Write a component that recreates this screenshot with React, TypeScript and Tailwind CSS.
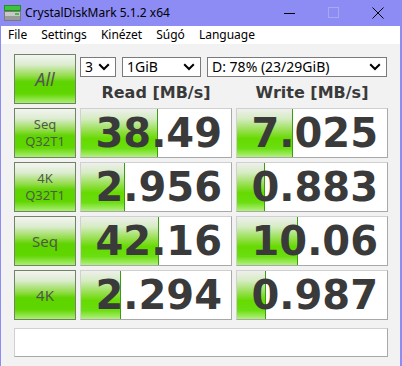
import React from "react";

const btnBg =
  "bg-[linear-gradient(to_bottom,#f4f5f2_0%,#dcecd0_20%,#92dc48_44%,#5ed400_56%,#60d600_80%,#acee74_100%)]";
const barBg =
  "bg-[linear-gradient(to_bottom,#eef0ec_0%,#d6ecc4_20%,#8ede40_48%,#66da00_62%,#6ade10_82%,#b4f080_100%)]";

function TestButton({ lines }: { lines: string[] }) {
  const single = lines.length === 1;
  return (
    <div
      className={`w-[62px] h-[50px] border border-[#6e8462] ${btnBg} flex flex-col items-center justify-center text-[#4e5a46] ${
        single ? "text-[15px] leading-[18px]" : "text-[13px] leading-[17px]"
      }`}
      style={{ fontFamily: '"Noto Sans", "Open Sans", sans-serif' }}
    >
      {lines.map((l) => (
        <span key={l}>{l}</span>
      ))}
    </div>
  );
}

function ValueBox({ value, bar }: { value: string; bar: number }) {
  return (
    <div className="relative w-[152px] h-[50px] border border-[#d0d0d0] border-r-[#a8a8a8] border-b-[#a8a8a8] bg-white overflow-hidden">
      <div
        className={`absolute left-0 top-0 bottom-0 ${barBg} border-r border-[#3c9a14]`}
        style={{ width: bar }}
      />
      <div
        className="relative h-full flex items-center justify-end pr-[9px] text-[40px] font-bold text-[#3a3a3a] leading-none"
        style={{ fontFamily: '"DejaVu Sans", Verdana, sans-serif' }}
      >
        {value}
      </div>
    </div>
  );
}

function Select({ w, label }: { w: number; label: string }) {
  return (
    <div
      className="h-[20px] border border-[#7a7a7a] bg-white flex items-center justify-between pl-[4px] pr-[5px] text-[14px] text-black"
      style={{ width: w, fontFamily: '"Noto Sans", "Open Sans", sans-serif' }}
    >
      <span className="leading-none">{label}</span>
      <svg width="12" height="8" viewBox="0 0 12 8">
        <path d="M1.2 1.2 L6 6 L10.8 1.2" fill="none" stroke="#000" strokeWidth="2" />
      </svg>
    </div>
  );
}

const rows = [
  { lines: ["Seq", "Q32T1"], r: "38.49", rb: 77, w: "7.025", wb: 56 },
  { lines: ["4K", "Q32T1"], r: "2.956", rb: 44, w: "0.883", wb: 28 },
  { lines: ["Seq"], r: "42.16", rb: 78, w: "10.06", wb: 61 },
  { lines: ["4K"], r: "2.294", rb: 40, w: "0.987", wb: 29 },
];

export default function App() {
  const ui = { fontFamily: '"Noto Sans", "Open Sans", sans-serif' };
  return (
    <div className="w-[402px] h-[366px] flex flex-col bg-[#8c8cf4] overflow-hidden">
      {/* title bar */}
      <div className="h-[26px] flex items-center shrink-0" style={ui}>
        <svg width="17" height="16" viewBox="0 0 17 16" className="ml-[4px]">
          <rect x="0.5" y="0.5" width="16" height="5" fill="#3cc43c" stroke="#2a8a2a" />
          <rect x="0.5" y="6.5" width="16" height="9" fill="#c8c8c8" stroke="#7a7a7a" />
          <rect x="1" y="11" width="15" height="4" fill="#9a9a9a" />
          <rect x="11" y="8" width="4" height="2" fill="#3cc43c" />
        </svg>
        <span className="ml-[4px] text-[12px] text-black leading-none">CrystalDiskMark 5.1.2 x64</span>
        <div className="ml-auto flex items-center">
          <svg width="44" height="26" viewBox="0 0 44 26">
            <path d="M16 13.5 H27" stroke="#000" strokeWidth="1" />
          </svg>
          <svg width="44" height="26" viewBox="0 0 44 26">
            <rect x="16.5" y="7.5" width="10" height="10" fill="none" stroke="#a9a9ee" strokeWidth="1" />
          </svg>
          <svg width="46" height="26" viewBox="0 0 46 26">
            <path d="M16.5 7.5 L27.5 18.5 M27.5 7.5 L16.5 18.5" stroke="#000" strokeWidth="1" />
          </svg>
        </div>
      </div>
      {/* body */}
      <div className="flex-1 ml-[1px] mr-[2px] flex flex-col bg-[#f2f2f2]">
        {/* menu */}
        <div
          className="h-[18px] bg-white flex items-center gap-[14px] pl-[7px] text-[12px] text-black leading-none"
          style={ui}
        >
          <span>File</span>
          <span>Settings</span>
          <span>Kinézet</span>
          <span>Súgó</span>
          <span>Language</span>
        </div>
        <div className="flex flex-col pl-[13px] pt-[10px] gap-[4px]">
          {/* top row */}
          <div className="flex gap-[4px]">
            <div
              className={`w-[62px] h-[50px] border border-[#6e8462] ${btnBg} flex items-center justify-center text-[18px] italic text-[#555]`}
              style={ui}
            >
              All
            </div>
            <div className="flex flex-col">
              <div className="flex gap-[6px] mt-[3px]">
                <Select w={36} label="3" />
                <Select w={79} label="1GiB" />
                <Select w={180} label="D: 78% (23/29GiB)" />
              </div>
              <div
                className="flex gap-[4px] mt-[8px] text-[16px] font-bold text-[#3a3a3a] leading-none"
                style={{ fontFamily: '"DejaVu Sans", Verdana, sans-serif' }}
              >
                <div className="w-[152px] text-center">Read [MB/s]</div>
                <div className="w-[152px] text-center">Write [MB/s]</div>
              </div>
            </div>
          </div>
          {rows.map((row) => (
            <div key={row.r} className="flex gap-[4px]">
              <TestButton lines={row.lines} />
              <ValueBox value={row.r} bar={row.rb} />
              <ValueBox value={row.w} bar={row.wb} />
            </div>
          ))}
          <div className="mt-[4px] w-[374px] h-[29px] border border-[#d0d0d0] border-r-[#a8a8a8] border-b-[#a8a8a8] bg-white" />
        </div>
      </div>
    </div>
  );
}
